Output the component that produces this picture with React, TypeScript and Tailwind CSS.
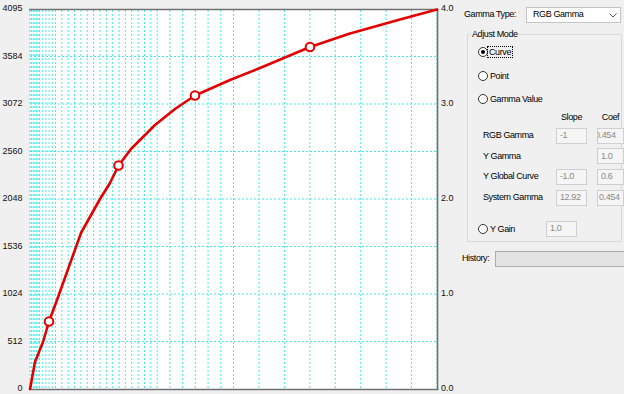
import React from "react";

const X0 = 30;
const X1 = 437;
const Y0 = 9;
const Y1 = 389;
const W = (X1 - X0) / 16;

function gridXs(): number[] {
  const xs: number[] = [];
  for (let k = 0; k <= 16; k++) xs.push(X0 + k * W);
  for (let k = 0; k < 8; k++) xs.push(X0 + (k + 0.5) * W);
  for (let k = 0; k < 5; k++) {
    xs.push(X0 + (k + 0.25) * W);
    xs.push(X0 + (k + 0.75) * W);
  }
  for (let j = 1; j < 8; j += 2) xs.push(X0 + (j / 8) * W);
  for (let j = 1; j < 6; j += 2) xs.push(X0 + (j / 16) * W);
  return xs;
}

const leftLabels = ["4095", "3584", "3072", "2560", "2048", "1536", "1024", "512", "0"];
const rightLabels: [string, number][] = [
  ["4.0", 9],
  ["3.0", 104],
  ["2.0", 199],
  ["1.0", 294],
  ["0.0", 389],
];

const curve: [number, number][] = [
  [30, 389],
  [35, 362],
  [43, 342],
  [49, 321.5],
  [57, 300],
  [81, 233],
  [100, 199],
  [110, 183],
  [118.5, 165.5],
  [131, 149],
  [155, 125],
  [175, 109],
  [195, 95.5],
  [230, 80],
  [260, 68],
  [310, 47],
  [350, 33.5],
  [400, 19.5],
  [437, 9.5],
];

const dots: [number, number][] = [
  [49, 321.5],
  [118.5, 165.5],
  [195, 95.5],
  [310, 47],
];

function Chart() {
  const xs = gridXs();
  return (
    <svg width={458} height={394} className="shrink-0 font-['Liberation_Sans',sans-serif]">
      <rect x={X0} y={Y0} width={X1 - X0} height={Y1 - Y0} fill="#ffffff" />
      {xs.map((x, i) => (
        <line
          key={"v" + i}
          x1={x}
          x2={x}
          y1={Y0 + 1}
          y2={Y1}
          stroke="#45e8e8"
          strokeWidth={1}
          strokeDasharray="2 2"
        />
      ))}
      {[1, 2, 3, 4, 5, 6, 7].map((n) => (
        <line
          key={"h" + n}
          x1={X0}
          x2={X1}
          y1={Y0 + n * 47.5}
          y2={Y0 + n * 47.5}
          stroke="#45e8e8"
          strokeWidth={1}
          strokeDasharray="2 2"
        />
      ))}
      <line x1={29} x2={438.5} y1={9.5} y2={9.5} stroke="#707070" strokeWidth={1.6} />
      <line x1={437.5} x2={437.5} y1={9} y2={390} stroke="#707070" strokeWidth={1.6} />
      <line x1={29} x2={438.5} y1={389.5} y2={389.5} stroke="#707070" strokeWidth={1.6} />
      <polyline
        points={curve.map((p) => p.join(",")).join(" ")}
        fill="none"
        stroke="#e40000"
        strokeWidth={2.6}
        strokeLinejoin="round"
        strokeLinecap="round"
      />
      {dots.map(([x, y], i) => (
        <circle key={"c" + i} cx={x} cy={y} r={4.3} fill="#ffffff" stroke="#e40000" strokeWidth={2} />
      ))}
      {leftLabels.map((t, i) => (
        <text
          key={"l" + t}
          x={22.5}
          y={9 + i * 47.5}
          textAnchor="end"
          dominantBaseline="middle"
          fontSize={9}
          fill="#111"
        >
          {t}
        </text>
      ))}
      {rightLabels.map(([t, y]) => (
        <text key={"r" + t} x={441} y={y} dominantBaseline="middle" fontSize={9} fill="#111">
          {t}
        </text>
      ))}
    </svg>
  );
}

function Radio({ checked, label, focus }: { checked?: boolean; label: string; focus?: boolean }) {
  return (
    <div className="flex h-[12px] items-center">
      <div className="flex h-[10px] w-[10px] items-center justify-center rounded-full border border-[#333] bg-white">
        {checked && <div className="h-[4px] w-[4px] rounded-full bg-black" />}
      </div>
      <span
        className={
          focus
            ? "ml-[-1px] border border-dotted border-black px-[1px] leading-[10px]"
            : "ml-[0px] border border-transparent px-[1px] leading-[10px]"
        }
      >
        {label}
      </span>
    </div>
  );
}

function Field({ value, shift, tight }: { value?: string; shift?: boolean; tight?: boolean }) {
  if (value === undefined) return <div />;
  const cls = shift ? "ml-[-3px]" : tight ? "ml-[1px]" : "ml-[3px]";
  return (
    <div className="flex h-[16px] items-center overflow-hidden border border-[#cfcfcf] bg-[#f5f5f5] text-[#8a8a8a]">
      <span className={cls + " whitespace-nowrap"}>{value}</span>
    </div>
  );
}

function Panel() {
  const rows: [string, string | undefined, string, boolean, boolean][] = [
    ["RGB Gamma", "-1", "0.454", true, false],
    ["Y Gamma", undefined, "1.0", false, false],
    ["Y Global Curve", "-1.0", "0.6", false, false],
    ["System Gamma", "12.92", "0.454", false, true],
  ];
  return (
    <div className="flex min-w-0 flex-1 flex-col text-[9px] tracking-[-0.4px] text-black font-['Liberation_Sans',sans-serif]">
      <div className="mt-[7px] flex h-[16px] items-center">
        <span className="ml-[6px] w-[62px]">Gamma Type:</span>
        <div className="flex h-[16px] w-[95px] items-center justify-between border border-[#c4c4c4] bg-white pl-[6px] pr-[3px]">
          <span>RGB Gamma</span>
          <svg width="8" height="5" viewBox="0 0 8 5">
            <path d="M0.5 0.5 L4 4 L7.5 0.5" fill="none" stroke="#555" strokeWidth="1" />
          </svg>
        </div>
      </div>
      <div className="relative ml-[9px] mt-[11px] w-[155px] border border-[#d9d9d9] pb-[4px] pl-[10px]">
        <span className="absolute left-[3px] top-[-7px] bg-[#f0f0f0] px-[1px] leading-[12px]">Adjust Mode</span>
        <div className="mt-[11px]">
          <Radio checked label="Curve" focus />
        </div>
        <div className="mt-[12px]">
          <Radio label="Point" />
        </div>
        <div className="mt-[11px]">
          <Radio label="Gamma Value" />
        </div>
        <div className="ml-[5px] mt-[6px] grid grid-cols-[63px_31px_27px] gap-x-[10px] gap-y-[4.7px]">
          <div className="h-[12px]" />
          <div className="mb-[-0.7px] h-[12px] text-center leading-[12px]">Slope</div>
          <div className="mb-[-0.7px] h-[12px] text-center leading-[12px]">Coef</div>
          {rows.map(([label, slope, coef, shift, tight]) => (
            <React.Fragment key={label}>
              <div className="flex h-[16px] items-center whitespace-nowrap">{label}</div>
              <Field value={slope} />
              <Field value={coef} shift={shift} tight={tight} />
            </React.Fragment>
          ))}
        </div>
        <div className="mt-[15px] flex h-[16px] items-center">
          <div className="w-[68px]">
            <Radio label="Y Gain" />
          </div>
          <div className="w-[31px]">
            <Field value="1.0" />
          </div>
        </div>
      </div>
      <div className="mt-[9px] flex h-[16px] items-center">
        <span className="ml-[4px] w-[33px]">History:</span>
        <div className="h-[16px] flex-1 border border-r-0 border-[#adadad] bg-[#e3e3e3]" />
      </div>
    </div>
  );
}

export default function App() {
  return (
    <div className="flex h-[394px] w-[624px] overflow-hidden bg-[#f0f0f0]">
      <Chart />
      <Panel />
    </div>
  );
}
